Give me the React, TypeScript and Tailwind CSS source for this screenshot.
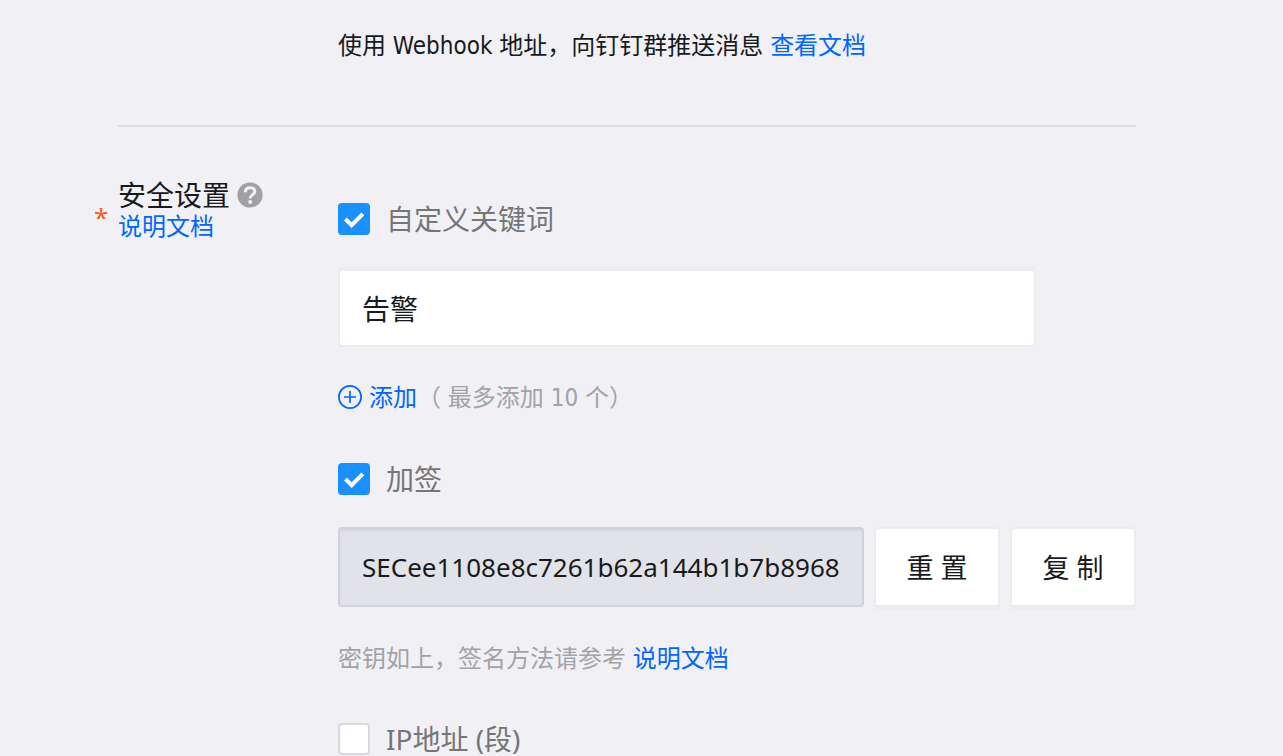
import { useState } from "react";
import type { ReactNode } from "react";

type CheckOptionProps = {
  label: string;
  checked: boolean;
  onChange: (checked: boolean) => void;
};

function CheckOption({ label, checked, onChange }: CheckOptionProps) {
  return (
    <label className="flex h-8 w-fit cursor-pointer items-center gap-4 font-['Noto_Sans','Noto_Sans_CJK_SC',sans-serif] text-[28px] leading-8 text-[#747677]">
      <span className="relative h-8 w-8 shrink-0">
        <input
          type="checkbox"
          checked={checked}
          onChange={(e) => onChange(e.target.checked)}
          className="block h-8 w-8 appearance-none rounded border-2 border-[#d9d9dc] bg-white checked:border-[#1890ff] checked:bg-[#1890ff]"
        />
        {checked && (
          <svg
            viewBox="0 0 32 32"
            fill="none"
            stroke="white"
            strokeWidth="4"
            className="pointer-events-none absolute inset-0 h-8 w-8"
          >
            <path d="M7.4 16L13.7 22.2L24.8 10.8" />
          </svg>
        )}
      </span>
      {label}
    </label>
  );
}

function DocLink({ children }: { children: ReactNode }) {
  return (
    <a href="#" className="text-[#0066ff] hover:underline">
      {children}
    </a>
  );
}

function BoxButton({ children, onClick }: { children: ReactNode; onClick?: () => void }) {
  return (
    <button
      type="button"
      onClick={onClick}
      className="h-20 w-[126px] shrink-0 rounded border-2 border-[#ececf0] bg-white pt-0.5 font-['Noto_Sans','Noto_Sans_CJK_SC',sans-serif] text-[27px] text-[#171a1d] shadow-[0_3px_0_#ededf1]"
    >
      {children}
    </button>
  );
}

export default function App() {
  const [useKeyword, setUseKeyword] = useState(true);
  const [useSign, setUseSign] = useState(true);
  const [useIp, setUseIp] = useState(false);
  const [keyword, setKeyword] = useState("告警");
  const secret = "SECee1108e8c7261b62a144b1b7b8968e";

  return (
    <main className="min-h-screen bg-[#f1f0f5] pr-[147px] pl-[118px] font-['DejaVu_Sans_Condensed','Noto_Sans_CJK_SC',sans-serif] text-2xl text-[#171a1d]">
      <section className="border-b-2 border-[#dfdee3] pt-[30px] pb-[63px] pl-[220px]">
        <p className="leading-8">
          使用 Webhook 地址，向钉钉群推送消息 <DocLink>查看文档</DocLink>
        </p>
      </section>

      <section className="flex pt-[52px]">
        <div className="relative w-[220px] shrink-0">
          <span className="absolute top-[22px] -left-6 font-['Noto_Sans',sans-serif] text-[26px] leading-8 text-[#ff5c1a]">
            *
          </span>
          <div className="flex h-8 items-center gap-[7px] text-[28px] leading-8">
            <span className="pt-1">安全设置</span>
            <button type="button" aria-label="帮助">
              <svg viewBox="0 0 26 26" className="block h-[26px] w-[26px]">
                <circle cx="13" cy="13" r="12.6" fill="#a0a1a5" />
                <path
                  d="M8.3 10.2C8.4 7.4 10.2 5.7 13.1 5.7C16 5.7 17.8 7.2 17.8 9.5C17.8 12.6 13.2 12.7 13.2 16.4"
                  fill="none"
                  stroke="#f1f0f5"
                  strokeWidth="3"
                />
                <circle cx="13.2" cy="19.9" r="2" fill="#f1f0f5" />
              </svg>
            </button>
          </div>
          <div className="leading-8">
            <DocLink>说明文档</DocLink>
          </div>
        </div>

        <div className="min-w-0 flex-1 pt-6">
          <CheckOption label="自定义关键词" checked={useKeyword} onChange={setUseKeyword} />
          <input
            type="text"
            aria-label="自定义关键词"
            value={keyword}
            onChange={(e) => setKeyword(e.target.value)}
            className="mt-8 block h-20 w-[698px] max-w-full rounded border-2 border-[#ebebee] bg-white px-[22px] pt-0.5 font-['Noto_Sans','Noto_Sans_CJK_SC',sans-serif] text-[28px] shadow-[inset_0_2px_1px_#ececee]"
          />
          <div className="mt-[34px] flex h-8 items-center leading-8">
            <button type="button" className="flex items-center gap-[7px] text-[#0066ff]">
              <svg
                viewBox="0 0 24 24"
                fill="none"
                stroke="currentColor"
                strokeWidth="1.7"
                className="h-6 w-6"
              >
                <circle cx="12" cy="12" r="11.1" />
                <path d="M12 6V18M6 12H18" />
              </svg>
              <span className="pt-0.5">添加</span>
            </button>
            <span className="pt-0.5 text-[#a2a3a6]">（ 最多添加 10 个）</span>
          </div>

          <div className="mt-[50px]">
            <CheckOption label="加签" checked={useSign} onChange={setUseSign} />
          </div>
          <div className="mt-8 flex gap-2.5">
            <input
              type="text"
              aria-label="加签密钥"
              value={secret}
              readOnly
              className="h-20 min-w-0 flex-1 rounded border-2 border-[#d1d2d7] bg-[#e2e3e8] px-[22px] font-['Noto_Sans',sans-serif] text-[26px] shadow-[inset_0_2px_2px_#d4d5da]"
            />
            <BoxButton>重 置</BoxButton>
            <BoxButton onClick={() => navigator.clipboard?.writeText(secret)}>复 制</BoxButton>
          </div>
          <p className="mt-9 leading-8 text-[#a2a3a6]">
            密钥如上，签名方法请参考 <DocLink>说明文档</DocLink>
          </p>

          <div className="mt-12">
            <CheckOption label="IP地址 (段)" checked={useIp} onChange={setUseIp} />
          </div>
        </div>
      </section>
    </main>
  );
}
